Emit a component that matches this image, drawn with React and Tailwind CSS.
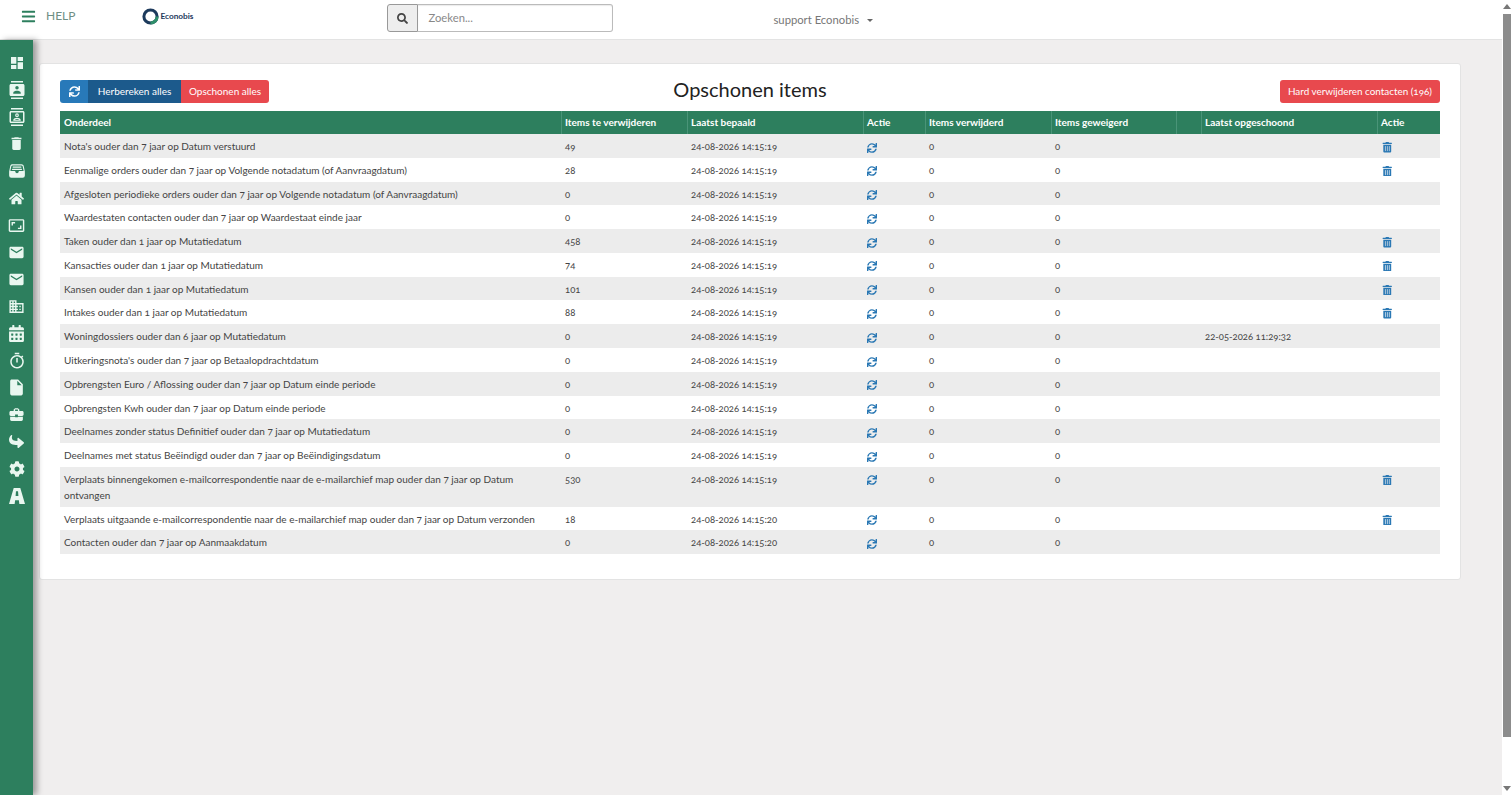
import React from 'react';
import { FaBars, FaSearch, FaSync, FaTrashAlt, FaHome, FaCalendarAlt, FaShare, FaCog } from 'react-icons/fa';
import { MdDashboard, MdContacts, MdOutlineContacts, MdDelete, MdAspectRatio, MdEmail, MdBusiness, MdOutlineTimer, MdInsertDriveFile, MdBusinessCenter } from 'react-icons/md';
import { IoFileTrayFull } from 'react-icons/io5';

const font = "font-['Lato','Open_Sans',sans-serif]";

const RoadIcon = ({ size }) => (
    <svg width={size} height={size} viewBox="0 0 17 17" fill="currentColor">
        <path fillRule="evenodd" d="M5 0h7l5 17h-6l-.5-4h-4L6 17H0zM7.4 3.5l-.4 5h3l-.4-5z" />
    </svg>
);

const sideIcons = [
    [MdDashboard, 16],
    [MdContacts, 18],
    [MdOutlineContacts, 18],
    [MdDelete, 17],
    [IoFileTrayFull, 18],
    [FaHome, 15],
    [MdAspectRatio, 17],
    [MdEmail, 17],
    [MdEmail, 17],
    [MdBusiness, 17],
    [FaCalendarAlt, 17],
    [MdOutlineTimer, 18],
    [MdInsertDriveFile, 19],
    [MdBusinessCenter, 17],
    [FaShare, 15],
    [FaCog, 16],
    [RoadIcon, 16],
];

const rows = [
    { name: "Nota's ouder dan 7 jaar op Datum verstuurd", count: '49', date: '24-08-2026 14:15:19', trash: true },
    { name: 'Eenmalige orders ouder dan 7 jaar op Volgende notadatum (of Aanvraagdatum)', count: '28', date: '24-08-2026 14:15:19', trash: true },
    { name: 'Afgesloten periodieke orders ouder dan 7 jaar op Volgende notadatum (of Aanvraagdatum)', count: '0', date: '24-08-2026 14:15:19' },
    { name: 'Waardestaten contacten ouder dan 7 jaar op Waardestaat einde jaar', count: '0', date: '24-08-2026 14:15:19' },
    { name: 'Taken ouder dan 1 jaar op Mutatiedatum', count: '458', date: '24-08-2026 14:15:19', trash: true },
    { name: 'Kansacties ouder dan 1 jaar op Mutatiedatum', count: '74', date: '24-08-2026 14:15:19', trash: true },
    { name: 'Kansen ouder dan 1 jaar op Mutatiedatum', count: '101', date: '24-08-2026 14:15:19', trash: true },
    { name: 'Intakes ouder dan 1 jaar op Mutatiedatum', count: '88', date: '24-08-2026 14:15:19', trash: true },
    { name: 'Woningdossiers ouder dan 6 jaar op Mutatiedatum', count: '0', date: '24-08-2026 14:15:19', last: '22-05-2026 11:29:32' },
    { name: 'Uitkeringsnota\'s ouder dan 7 jaar op Betaalopdrachtdatum', count: '0', date: '24-08-2026 14:15:19' },
    { name: 'Opbrengsten Euro / Aflossing ouder dan 7 jaar op Datum einde periode', count: '0', date: '24-08-2026 14:15:19' },
    { name: 'Opbrengsten Kwh ouder dan 7 jaar op Datum einde periode', count: '0', date: '24-08-2026 14:15:19' },
    { name: 'Deelnames zonder status Definitief ouder dan 7 jaar op Mutatiedatum', count: '0', date: '24-08-2026 14:15:19' },
    { name: 'Deelnames met status Beëindigd ouder dan 7 jaar op Beëindigingsdatum', count: '0', date: '24-08-2026 14:15:19' },
    { name: 'Verplaats binnengekomen e-mailcorrespondentie naar de e-mailarchief map ouder dan 7 jaar op Datum ontvangen', count: '530', date: '24-08-2026 14:15:19', trash: true },
    { name: 'Verplaats uitgaande e-mailcorrespondentie naar de e-mailarchief map ouder dan 7 jaar op Datum verzonden', count: '18', date: '24-08-2026 14:15:20', trash: true },
    { name: 'Contacten ouder dan 7 jaar op Aanmaakdatum', count: '0', date: '24-08-2026 14:15:20' },
];

const heads = ['Onderdeel', 'Items te verwijderen', 'Laatst bepaald', 'Actie', 'Items verwijderd', 'Items geweigerd', '', 'Laatst opgeschoond', 'Actie'];
const gridCols = 'grid grid-cols-[501px_126px_176px_62px_126px_125px_25px_176px_63px]';

const Cell = ({ children, small }) => (
    <div className={`min-w-0 px-1 pb-[3px] pt-[5px] leading-[15.78px] ${small ? 'text-[9.5px]' : ''}`}>{children}</div>
);

const App = () => {
    return (
        <div className={`flex h-[795px] w-[1512px] overflow-hidden bg-white text-[10px] text-[#444] ${font} [font-variant-numeric:oldstyle-nums]`}>
            <div className="flex w-[1502px] flex-col">
                {/* top bar */}
                <header className="flex h-[40px] shrink-0 items-start border-b border-[#e3e3e3] bg-white">
                    <FaBars size={15} className="ml-[21px] mt-[9px] text-[#2d7f5e]" />
                    <span className="ml-[10px] mt-[8px] text-xs text-[#6f8f84]">HELP</span>
                    <div className="ml-[67px] mt-[8px] flex items-center">
                        <svg width="17" height="17" viewBox="0 0 17 17">
                            <circle cx="8.5" cy="8.5" r="6.6" fill="none" stroke="#1d3a5c" strokeWidth="3" />
                            <path d="M8.5 15.1a6.6 6.6 0 0 0 6.6-6.6" fill="none" stroke="#2f8f6a" strokeWidth="3" />
                        </svg>
                        <span className="ml-px text-[8.25px] font-bold text-[#1d3a5c]">Econobis</span>
                    </div>
                    <div className="ml-[194px] mt-[4px] flex h-[28px]">
                        <div className="flex w-[31px] items-center justify-center rounded-l-[3px] border border-[#999] bg-[#eee] text-[#444]">
                            <FaSearch size={11} />
                        </div>
                        <div className="flex w-[195px] items-center rounded-r-[3px] border border-l-0 border-[#bbb] pl-[10px] text-[11.25px] text-[#888] shadow-[inset_0_1px_1px_rgba(0,0,0,0.08)]">
                            Zoeken...
                        </div>
                    </div>
                    <div className="ml-[160px] mt-[12px] flex items-center text-[11.25px] text-[#777]">
                        support Econobis
                        <span className="ml-[8px] mt-px h-0 w-0 border-x-[3px] border-t-[3px] border-x-transparent border-t-[#666]"></span>
                    </div>
                </header>

                <div className="flex min-h-0 flex-1">
                    {/* side menu */}
                    <nav className="z-10 flex w-[33px] shrink-0 flex-col items-center bg-[#2d7f5e] pt-[9px] shadow-[4px_0_6px_rgba(0,0,0,0.35)]">
                        {sideIcons.map(([Icon, size], i) => (
                            <div key={i} className="flex h-[27.1px] w-full items-center justify-center text-[#e9f7f0]">
                                <Icon size={size} className={i === 14 ? '-scale-y-100' : ''} />
                            </div>
                        ))}
                    </nav>

                    <main className="min-w-0 flex-1 bg-[#f0eeee] pl-[6px] pr-[41px] pt-[23px]">
                        <div className="rounded-[3px] border border-[#e3e3e3] bg-white px-[20px] pb-[25px] pt-[16px]">
                            <div className="flex h-[23px] items-center justify-between">
                                <div className="flex w-[280px] text-[10px] text-white">
                                    <div className="flex h-[23px] w-[28px] items-center justify-center rounded-l-[3px] bg-[#2879b9]">
                                        <FaSync size={11} />
                                    </div>
                                    <div className="flex h-[23px] w-[93px] items-center justify-center bg-[#1c5a8c]">Herbereken alles</div>
                                    <div className="flex h-[23px] w-[88px] items-center justify-center rounded-r-[3px] bg-[#e8494e]">Opschonen alles</div>
                                </div>
                                <h3 className="pb-[6px] text-xl leading-[20px] text-[#222]">Opschonen items</h3>
                                <div className="flex w-[280px] justify-end">
                                    <div className="flex h-[23px] w-[160px] items-center justify-center rounded-[3px] bg-[#e8494e] text-[9.9px] text-white">
                                        Hard verwijderen contacten (196)
                                    </div>
                                </div>
                            </div>

                            <div className="mt-[8px]">
                                <div className={`${gridCols} h-[23px] bg-[#2d7f5e] font-bold text-white`}>
                                    {heads.map((h, i) => (
                                        <div key={i} className="border-l border-[#4a9478] py-[3px] pl-[3px] pr-1 leading-[16px] first:border-l-0 first:pl-1">{h}</div>
                                    ))}
                                </div>
                                {rows.map((r, i) => (
                                    <div key={i} className={`${gridCols} ${i % 2 === 0 ? 'bg-[#ececec]' : 'bg-white'}`}>
                                        <Cell>{r.name}</Cell>
                                        <Cell small>{r.count}</Cell>
                                        <Cell small>{r.date}</Cell>
                                        <Cell><FaSync size={10} className="mt-[3.5px] text-[#2a78b4]" /></Cell>
                                        <Cell small>0</Cell>
                                        <Cell small>0</Cell>
                                        <Cell></Cell>
                                        <Cell small>{r.last}</Cell>
                                        <Cell>{r.trash && <FaTrashAlt size={10.5} className="ml-px mt-[3px] text-[#2a78b4]" />}</Cell>
                                    </div>
                                ))}
                            </div>
                        </div>
                    </main>
                </div>
            </div>

            {/* page scrollbar */}
            <div className="flex w-[10px] shrink-0 flex-col items-center bg-white">
                <span className="mt-[4px] h-0 w-0 border-x-[4px] border-b-[5px] border-x-transparent border-b-[#777]"></span>
                <div className="mt-[5px] h-[723px] w-[8px] bg-[#8c8c8c]"></div>
                <span className="mb-[4px] mt-auto h-0 w-0 border-x-[4px] border-t-[5px] border-x-transparent border-t-[#777]"></span>
            </div>
        </div>
    );
};

export default App;
